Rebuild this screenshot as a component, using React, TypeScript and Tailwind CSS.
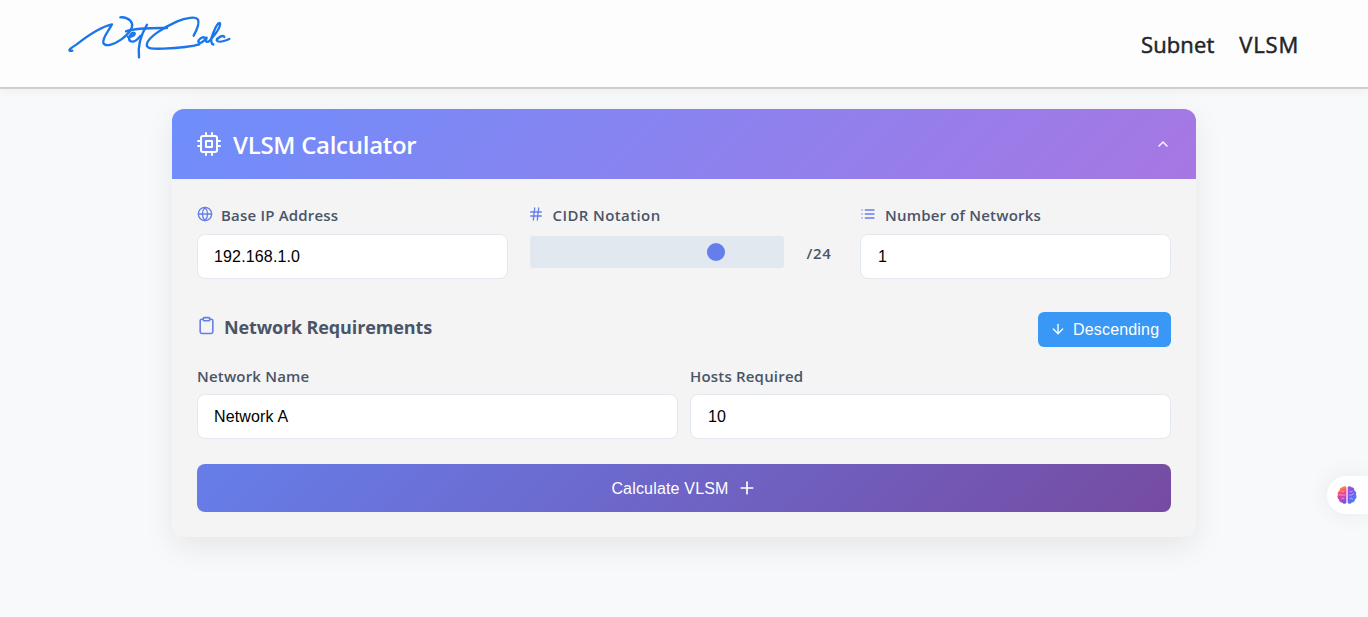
import React from "react";
import {
  FiCpu,
  FiChevronUp,
  FiGlobe,
  FiHash,
  FiList,
  FiClipboard,
  FiArrowDown,
  FiPlus,
} from "react-icons/fi";

function Logo() {
  return (
    <svg
      className="h-[60px] w-[200px]"
      viewBox="0 0 600 180"
      fill="none"
      stroke="#1b76ea"
      strokeWidth="7"
      strokeLinecap="round"
      strokeLinejoin="round"
      role="img"
      aria-label="NetCalc"
    >
      <path d="M67 137 Q58 139 58 135 C62 128 72 124 80 118 C108 96 150 66 186 58 C178 76 157 96 160 114 C166 128 196 116 214 103 C234 88 250 72 246 56 C242 42 224 36 211 37" />
      <path d="M234 96 C248 96 258 88 253 84 C244 80 232 100 240 108 C250 114 264 102 272 92" />
      <path d="M291 59 C276 84 262 118 267 157" />
      <path d="M228 79 C260 68 310 69 351 69" />
      <path d="M431 92 C440 76 448 54 444 44 C438 34 408 37 380 50 C340 68 296 96 291 116 C286 132 310 132 340 131 C380 129 420 126 448 118" />
      <path d="M466 99 C456 92 442 106 446 112 C452 118 464 106 470 98 C464 112 472 114 480 106 C498 86 512 64 510 55 C504 48 490 80 484 100 C482 114 488 120 490 118" />
      <path d="M523 96 C520 88 502 98 500 106 C504 114 524 108 538 102" />
    </svg>
  );
}

function Brain() {
  return (
    <svg className="size-5" viewBox="0 0 20 20">
      <defs>
        <linearGradient id="brain-left" x1="0.3" y1="0" x2="0.5" y2="1">
          <stop offset="0" stopColor="#ff9a2e" />
          <stop offset="0.45" stopColor="#f2408c" />
          <stop offset="1" stopColor="#7a4df0" />
        </linearGradient>
        <linearGradient id="brain-right" x1="0" y1="0" x2="0.7" y2="1">
          <stop offset="0" stopColor="#b04be0" />
          <stop offset="0.5" stopColor="#7659ee" />
          <stop offset="1" stopColor="#3a8df5" />
        </linearGradient>
      </defs>
      <path
        fill="url(#brain-left)"
        d="M9.4 2.6C8.9.9 6.3.6 5.5 2.3 3.6 2.1 2.3 3.8 2.8 5.4.9 6.3.3 8.2 1.1 9.8-.1 11.4.4 13.5 2 14.4 1.9 16.2 3.3 17.6 5.1 17.5 6.4 19.4 8.9 19.2 9.4 17.4Z"
      />
      <path
        fill="url(#brain-right)"
        d="M10.6 2.6C11.1.9 13.7.6 14.5 2.3 16.4 2.1 17.7 3.8 17.2 5.4 19.1 6.3 19.7 8.2 18.9 9.8 20.1 11.4 19.6 13.5 18 14.4 18.1 16.2 16.7 17.6 14.9 17.5 13.6 19.4 11.1 19.2 10.6 17.4Z"
      />
      <path
        fill="none"
        stroke="#fff"
        strokeOpacity="0.6"
        strokeWidth="0.8"
        strokeLinecap="round"
        d="M2.5 10H8M4.5 6C5 7 6 7.2 7 6.5M4.5 14.2C5 13 6 12.8 7 13.5M13 6.5C14 7.2 15 7 15.5 6M12.5 10H14.5L16.5 8.5M13 13.5C14 12.8 15 13 15.5 14.2"
      />
    </svg>
  );
}

const field =
  "flex h-[45px] w-full items-center rounded-lg border border-[#e2e8f0] bg-white pr-4 font-['Liberation_Sans',sans-serif] text-base tracking-[0.15px] text-black outline-none";
const label =
  "flex h-6 items-center text-[15px] font-semibold tracking-[0.19px] whitespace-nowrap text-[#4a5568]";

export default function App() {
  return (
    <div className="flex h-[617px] flex-col overflow-hidden bg-[#f8f9fb] font-['Open_Sans','Noto_Sans',sans-serif]">
      <header className="z-10 flex h-[89px] shrink-0 justify-between border-b-2 border-[#cfcfcf] bg-[#fdfdfd] pt-[5px] pr-[69px] pl-[50px] shadow-[0_2px_10px_rgba(0,0,0,0.05)]">
        <Logo />
        <nav className="flex h-[78px] items-center gap-[25px] text-[22px] font-medium text-[#212529] [-webkit-text-stroke:0.5px_#212529]">
          <a href="#subnet" className="tracking-[0.1px]">Subnet</a>
          <a href="#vlsm" className="tracking-[0.8px]">VLSM</a>
        </nav>
      </header>

      <main className="mx-auto mt-5 w-[1024px] shrink-0 overflow-hidden rounded-xl bg-[#f4f4f4] shadow-[0_10px_30px_rgba(0,0,0,0.08)]">
        <div className="flex h-[70px] items-center justify-between bg-[linear-gradient(135deg,#6e8efb,#a777e3)] px-[25px] text-white">
          <div className="flex items-center gap-3">
            <FiCpu size={24} />
            <h1 className="pt-0.5 text-2xl font-semibold tracking-[-0.28px]">VLSM Calculator</h1>
          </div>
          <FiChevronUp size={16} />
        </div>

        <div className="px-[25px] pt-6 pb-[25px]">
          <div className="grid grid-cols-[311px_311px_311px] justify-between">
            <div>
              <label className={label}>
                <FiGlobe size={16} className="mr-2 mb-0.5 text-[#667eea]" />
                <span>Base IP Address</span>
              </label>
              <input className={`${field} mt-[7px] pl-4`} defaultValue="192.168.1.0" />
            </div>
            <div className="-ml-px">
              <label className={label}>
                <FiHash size={16} className="mr-[9px] mb-0.5 text-[#667eea]" />
                <span className="tracking-[0.4px]">CIDR Notation</span>
              </label>
              <div className="mt-[9px] flex">
                <div className="ml-0.5 flex h-8 w-[254px] rounded-[3px] bg-[#e2e8f0] pt-[7px] pl-[177px]">
                  <div className="size-[18px] rounded-full bg-[#667eea]" />
                </div>
                <span className="ml-[23px] pt-1.5 text-[15px] font-semibold tracking-[0.6px] text-[#4a5568]">/24</span>
              </div>
            </div>
            <div>
              <label className={label}>
                <FiList size={16} className="mr-[9px] mb-0.5 text-[#667eea]" />
                <span>Number of Networks</span>
              </label>
              <input className={`${field} mt-[7px] pl-[17px]`} defaultValue="1" />
            </div>
          </div>

          <div className="mt-[33px] flex h-[35px] items-center justify-between">
            <h2 className="flex items-center text-lg font-bold tracking-[-0.13px] text-[#4a5568]">
              <FiClipboard size={19} className="mr-2 mb-2 text-[#667eea]" />
              <span className="mb-[5px]">Network Requirements</span>
            </h2>
            <button className="flex h-[35px] w-[133px] items-center rounded-md bg-[#3997f5] pl-3 font-['Liberation_Sans',sans-serif] text-base tracking-[0.17px] text-white">
              <FiArrowDown size={16} className="mr-[7px] mb-px" />
              Descending
            </button>
          </div>

          <div className="mt-[17px] grid grid-cols-2 gap-3">
            <div>
              <label className={label}>Network Name</label>
              <input className={`${field} mt-1.5 pl-4`} defaultValue="Network A" />
            </div>
            <div>
              <label className={label}>Hosts Required</label>
              <input className={`${field} mt-1.5 pl-[17px]`} defaultValue="10" />
            </div>
          </div>

          <button className="mt-[25px] flex h-12 w-full items-center justify-center gap-2 rounded-lg bg-[linear-gradient(135deg,#667eea,#764ba2)] pt-px font-['Liberation_Sans',sans-serif] text-base tracking-[0.18px] text-white">
            Calculate VLSM
            <FiPlus size={20} className="mb-0.5" />
          </button>
        </div>
      </main>

      <button
        aria-label="Assistant"
        className="absolute top-[476px] right-0 flex h-[38px] w-[41px] items-center rounded-l-full bg-white pl-[10px] shadow-[0_0_24px_rgba(0,0,0,0.07)]"
      >
        <Brain />
      </button>
    </div>
  );
}
